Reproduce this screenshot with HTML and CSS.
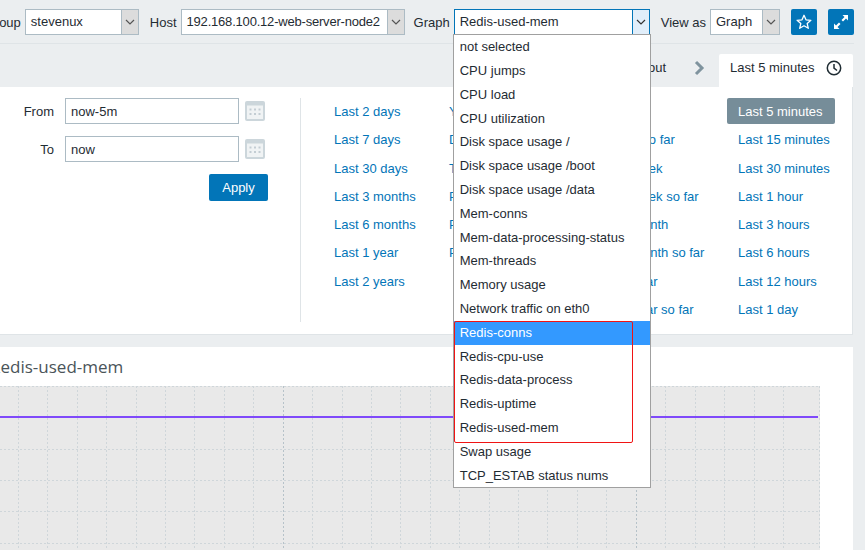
FILE: index.html
```html
<!DOCTYPE html>
<html lang="en">
<head>
    <meta charset="UTF-8">
    <title>Graphs</title>
    <link rel="stylesheet" href="styles.css">
</head>
<body>
    <div class="header">
        <div class="field">
            <span>Group</span>
            <div class="select select-group">
                <span class="select-value">stevenux</span>
                <span class="select-arrow"><svg width="10" height="6" viewBox="0 0 10 6"><path d="M1 1l4 4 4-4" fill="none" stroke="#555" stroke-width="1.2"/></svg></span>
            </div>
        </div>
        <div class="field">
            <span>Host</span>
            <div class="select select-host">
                <span class="select-value">192.168.100.12-web-server-node2</span>
                <span class="select-arrow"><svg width="10" height="6" viewBox="0 0 10 6"><path d="M1 1l4 4 4-4" fill="none" stroke="#555" stroke-width="1.2"/></svg></span>
            </div>
        </div>
        <div class="field field-graph">
            <span>Graph</span>
            <div class="select select-graph">
                <span class="select-value">Redis-used-mem</span>
                <span class="select-arrow"><svg width="10" height="6" viewBox="0 0 10 6"><path d="M1 1l4 4 4-4" fill="none" stroke="#333" stroke-width="1.2"/></svg></span>
                <div class="dropdown">
                    <div class="dropdown-item">not selected</div>
                    <div class="dropdown-item">CPU jumps</div>
                    <div class="dropdown-item">CPU load</div>
                    <div class="dropdown-item">CPU utilization</div>
                    <div class="dropdown-item">Disk space usage /</div>
                    <div class="dropdown-item">Disk space usage /boot</div>
                    <div class="dropdown-item">Disk space usage /data</div>
                    <div class="dropdown-item">Mem-conns</div>
                    <div class="dropdown-item">Mem-data-processing-status</div>
                    <div class="dropdown-item">Mem-threads</div>
                    <div class="dropdown-item">Memory usage</div>
                    <div class="dropdown-item">Network traffic on eth0</div>
                    <div class="dropdown-item active">Redis-conns</div>
                    <div class="dropdown-item">Redis-cpu-use</div>
                    <div class="dropdown-item">Redis-data-process</div>
                    <div class="dropdown-item">Redis-uptime</div>
                    <div class="dropdown-item">Redis-used-mem</div>
                    <div class="dropdown-item">Swap usage</div>
                    <div class="dropdown-item">TCP_ESTAB status nums</div>
                    <div class="red-box"></div>
                </div>
            </div>
        </div>
        <div class="field">
            <span>View as</span>
            <div class="select select-view">
                <span class="select-value">Graph</span>
                <span class="select-arrow"><svg width="10" height="6" viewBox="0 0 10 6"><path d="M1 1l4 4 4-4" fill="none" stroke="#555" stroke-width="1.2"/></svg></span>
            </div>
        </div>
        <button class="icon-btn">
            <svg width="16" height="16" viewBox="0 0 16 16"><path d="M8 1.3l2 4.500 4.900.5-3.700 3.200 1.100 4.800L8 11.800l-4.300 2.500 1.100-4.800L1.100 6.300l4.900-.5z" fill="none" stroke="#fff" stroke-width="1.300" stroke-linejoin="round"/></svg>
        </button>
        <button class="icon-btn">
            <svg width="16" height="16" viewBox="0 0 16 16"><path d="M9.500 1H15v5.500l-2-2-3 3-1.500-1.500 3-3zM6.500 15H1V9.500l2 2 3-3 1.500 1.500-3 3z" fill="#fff"/></svg>
        </button>
    </div>

    <div class="tabs">
        <span class="zoom-out">Zoom out</span>
        <svg class="chevron" width="11" height="16" viewBox="0 0 11 16"><path d="M2 2l6 6-6 6" fill="none" stroke="#7f939e" stroke-width="3"/></svg>
        <div class="tab">
            <span>Last 5 minutes</span>
            <svg width="16" height="16" viewBox="0 0 16 16"><circle cx="8" cy="8" r="6.700" fill="none" stroke="#1f2c33" stroke-width="1.500"/><path d="M8 4v4.200l3 2.300" fill="none" stroke="#1f2c33" stroke-width="1.500"/></svg>
        </div>
    </div>

    <div class="filter">
        <div class="time-form">
            <div class="time-row">
                <label class="time-label">From</label>
                <input class="time-input" type="text" value="now-5m">
                <svg class="calendar" width="20" height="20" viewBox="0 0 20 20"><rect width="20" height="20" rx="2" fill="#ccd6db"/><rect x="2" y="4.500" width="16" height="13.500" fill="#f0f3f4"/><path d="M4.500 7.500h2v2h-2zM9 7.500h2v2H9zM13.500 7.500h2v2h-2zM4.500 12h2v2h-2zM9 12h2v2H9zM13.500 12h2v2h-2z" fill="#c3cdd3"/></svg>
            </div>
            <div class="time-row">
                <label class="time-label">To</label>
                <input class="time-input" type="text" value="now">
                <svg class="calendar" width="20" height="20" viewBox="0 0 20 20"><rect width="20" height="20" rx="2" fill="#ccd6db"/><rect x="2" y="4.500" width="16" height="13.500" fill="#f0f3f4"/><path d="M4.500 7.500h2v2h-2zM9 7.500h2v2H9zM13.500 7.500h2v2h-2zM4.500 12h2v2h-2zM9 12h2v2H9zM13.500 12h2v2h-2z" fill="#c3cdd3"/></svg>
            </div>
            <button class="apply">Apply</button>
        </div>
        <div class="ranges">
            <ul class="range-list">
                <li><a>Last 2 days</a></li>
                <li><a>Last 7 days</a></li>
                <li><a>Last 30 days</a></li>
                <li><a>Last 3 months</a></li>
                <li><a>Last 6 months</a></li>
                <li><a>Last 1 year</a></li>
                <li><a>Last 2 years</a></li>
            </ul>
            <ul class="range-list">
                <li><a>Yesterday</a></li>
                <li><a>Day before yesterday</a></li>
                <li><a>This day last week</a></li>
                <li><a>Previous week</a></li>
                <li><a>Previous month</a></li>
                <li><a>Previous year</a></li>
            </ul>
            <ul class="range-list">
                <li><a>Today</a></li>
                <li><a>Today so far</a></li>
                <li><a>This week</a></li>
                <li><a>This week so far</a></li>
                <li><a>This month</a></li>
                <li><a>This month so far</a></li>
                <li><a>This year</a></li>
                <li><a>This year so far</a></li>
            </ul>
            <ul class="range-list range-list-last">
                <li><a class="selected">Last 5 minutes</a></li>
                <li><a>Last 15 minutes</a></li>
                <li><a>Last 30 minutes</a></li>
                <li><a>Last 1 hour</a></li>
                <li><a>Last 3 hours</a></li>
                <li><a>Last 6 hours</a></li>
                <li><a>Last 12 hours</a></li>
                <li><a>Last 1 day</a></li>
            </ul>
        </div>
    </div>

    <div class="graph-panel">
        <h2 class="graph-title">Redis-used-mem</h2>
        <svg class="chart" width="820" height="165" viewBox="0 0 820 165">
            <rect width="820" height="165" fill="#e9e9e9"/>
            <path class="grid-line" d="M18.500 0V165M47.500 0V165M77.500 0V165M106.500 0V165M136.500 0V165M165.500 0V165M194.500 0V165M224.500 0V165M253.500 0V165M312.500 0V165M342.500 0V165M371.500 0V165M400.500 0V165M430.500 0V165M459.500 0V165M489.500 0V165M518.500 0V165M547.500 0V165M577.500 0V165M606.500 0V165M665.500 0V165M695.500 0V165M724.500 0V165M754.500 0V165M783.500 0V165M819.500 0V165"/>
            <path class="grid-line" d="M0 0.500H820M0 63.500H820M0 94.500H820M0 125.500H820M0 157.500H820"/>
            <path class="grid-line grid-line-dark" d="M283.500 0V165M636.500 0V165"/>
            <path class="value-line" d="M0 31H818"/>
        </svg>
    </div>
</body>
</html>
```

FILE: styles.css
```css
* {
    box-sizing: border-box;
}
html, body {
    height: 550px;
    overflow: hidden;
}
body {
    margin: 0;
    background-color: #ebeef0;
    color: #1f2c33;
    font-family: "Liberation Sans", Arial, sans-serif;
    font-size: 13px;
}
.header {
    display: flex;
    justify-content: flex-end;
    align-items: flex-start;
    gap: 11px;
    height: 44px;
    margin-right: 11px;
    padding-top: 9px;
    border-bottom: 1px solid #dfe4e7;
    white-space: nowrap;
}
.field {
    display: flex;
    align-items: center;
    gap: 4px;
    flex-shrink: 0;
}
.field-graph {
    margin-left: -2px;
}
.select {
    position: relative;
    display: flex;
    height: 26px;
    background-color: #fff;
    border: 1px solid #acbbc4;
}
.select-group { width: 114px; }
.select-host { width: 224px; letter-spacing: -0.2px; }
.select-graph { width: 196px; border-color: #0275b8; }
.select-view { width: 70px; }
.select-value {
    flex: 1;
    padding-left: 5px;
    line-height: 23px;
}
.select-arrow {
    display: flex;
    align-items: center;
    justify-content: center;
    width: 17px;
    background-color: #dcdcdc;
    border-left: 1px solid #acbbc4;
}
.select-graph .select-arrow {
    background-color: #e1eefa;
    border-left-color: #0275b8;
}
.dropdown {
    position: absolute;
    top: 24px;
    left: -2px;
    z-index: 5;
    width: 198px;
    padding-top: 0.3px;
    background-color: #fff;
    border: 1px solid #a0a0a0;
}
.dropdown-item {
    height: 23.8px;
    padding-left: 6px;
    line-height: 23.8px;
}
.dropdown-item.active {
    background-color: #3399ff;
    color: #fff;
}
.red-box {
    position: absolute;
    top: 286px;
    left: 0;
    width: 179px;
    height: 122px;
    border: 1px solid #f01414;
    border-radius: 2px;
}
.icon-btn {
    display: flex;
    align-items: center;
    justify-content: center;
    flex-shrink: 0;
    width: 26px;
    height: 26px;
    padding: 0;
    background-color: #0275b8;
    border: none;
    border-radius: 2px;
}
.tabs {
    display: flex;
    justify-content: flex-end;
    align-items: flex-end;
    height: 43px;
    margin-right: 12px;
}
.zoom-out {
    margin-right: 28px;
    margin-bottom: 12px;
}
.chevron {
    margin-right: 14px;
    margin-bottom: 11px;
}
.tab {
    display: flex;
    align-items: center;
    justify-content: space-between;
    width: 134px;
    height: 33px;
    padding: 0 11px 6px;
    background-color: #fff;
    border-radius: 2px 2px 0 0;
}
.filter {
    display: flex;
    height: 248px;
    margin-right: 12px;
    padding-top: 11px;
    background-color: #fff;
    border-bottom: 1px solid #dfe4e7;
    border-right: 1px solid #dfe4e7;
}
.time-form {
    display: flex;
    flex-direction: column;
    align-items: flex-end;
    gap: 12px;
    flex-shrink: 0;
    width: 268px;
}
.time-row {
    display: flex;
    align-items: center;
    width: 100%;
}
.time-label {
    width: 54px;
    text-align: right;
    margin-right: 11px;
}
.time-input {
    width: 174px;
    height: 26px;
    padding: 0 5px;
    color: #1f2c33;
    font: inherit;
    border: 1px solid #acbbc4;
    border-radius: 0;
}
.calendar {
    margin-left: 6px;
}
.apply {
    width: 59px;
    height: 27px;
    padding: 0;
    color: #fff;
    font: inherit;
    background-color: #0275b8;
    border: none;
    border-radius: 2px;
}
.ranges {
    display: grid;
    grid-template-columns: 115px 155px 134px 96px;
    height: 224px;
    margin-left: 32px;
    padding-left: 33px;
    border-left: 1px solid #dfe4e7;
}
.range-list {
    margin: 0;
    padding: 0;
    list-style: none;
    white-space: nowrap;
}
.range-list li {
    height: 28.25px;
    line-height: 27px;
}
.range-list a {
    color: #0275b8;
}
.range-list a.selected {
    display: block;
    width: 108px;
    height: 26px;
    margin-left: -11px;
    padding-left: 11px;
    line-height: 27px;
    color: #fff;
    background-color: #768d99;
    border-radius: 2px;
}
.graph-panel {
    height: 204px;
    margin-top: 12px;
    margin-right: 12px;
    background-color: #fff;
    overflow: hidden;
}
.graph-title {
    height: 39px;
    margin: 0 0 0 -10px;
    padding-top: 10px;
    color: #4a5459;
    font-family: "Open Sans", sans-serif;
    font-size: 17px;
    font-weight: 400;
    line-height: 20px;
}
.chart {
    display: block;
}
.grid-line {
    fill: none;
    stroke: #cfd6da;
    stroke-dasharray: 2 2;
}
.grid-line-dark {
    stroke: #b6c2c9;
}
.value-line {
    fill: none;
    stroke: #5b14ff;
    stroke-width: 1.5;
}
```
